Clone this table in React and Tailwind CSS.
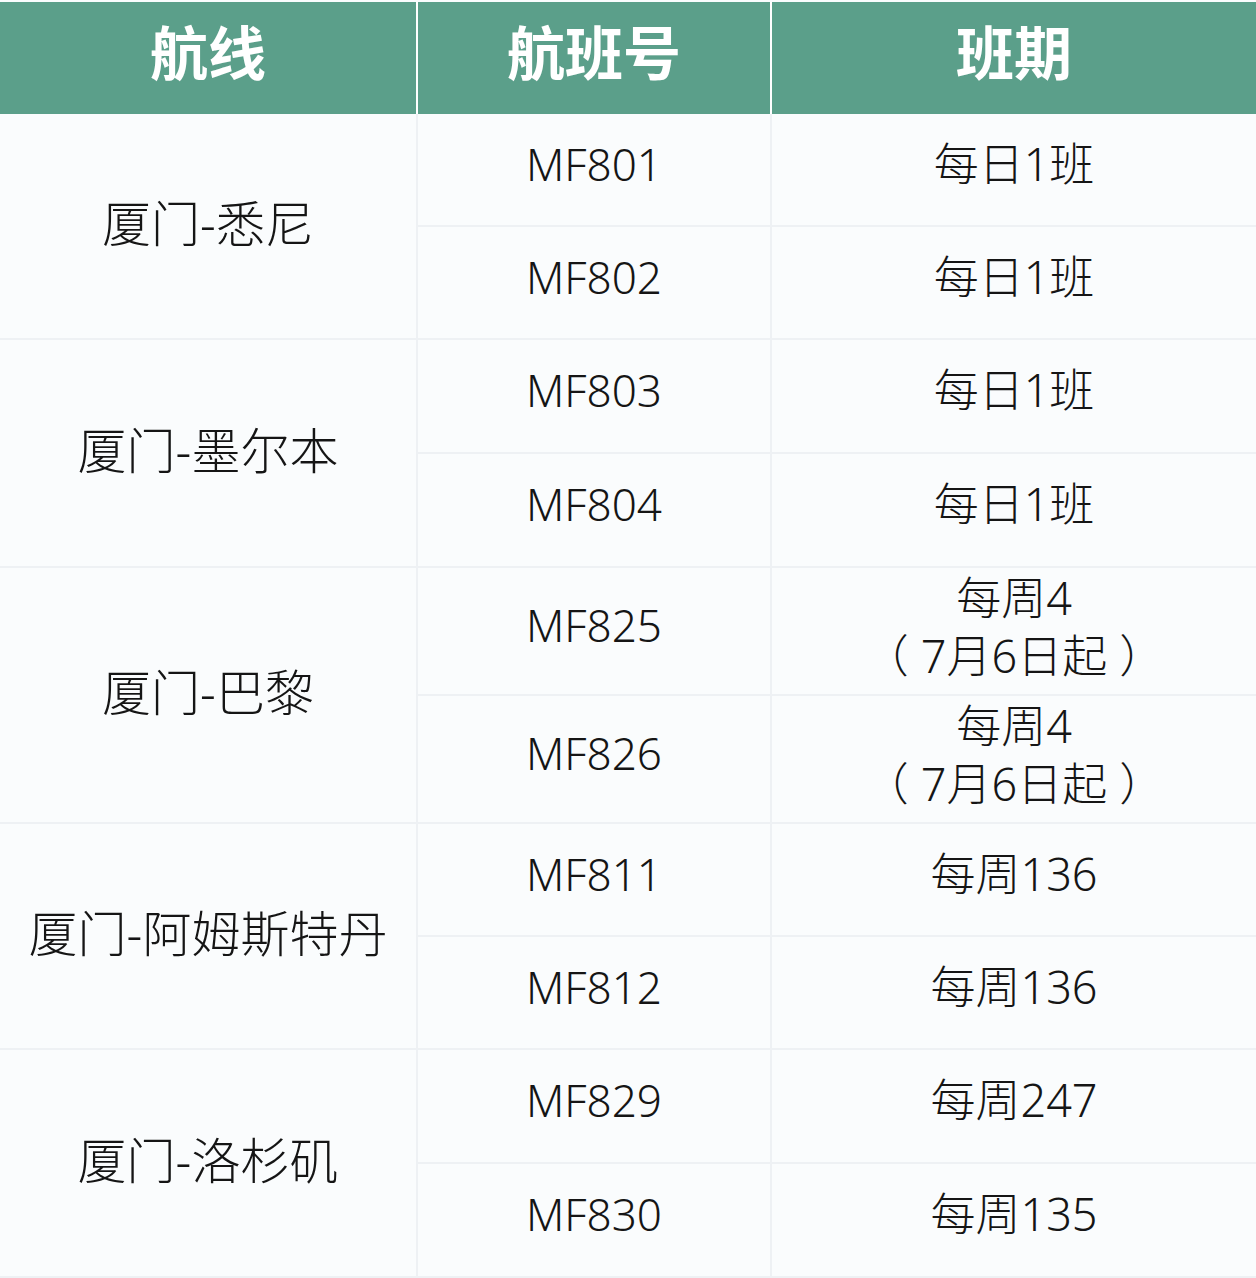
const rows = [
    { route: '厦门-悉尼', flights: [['MF801', '每日1班'], ['MF802', '每日1班']], h: 'h-[113px]' },
    { route: '厦门-墨尔本', flights: [['MF803', '每日1班'], ['MF804', '每日1班']], h: 'h-[114px]' },
    { route: '厦门-巴黎', flights: [['MF825', '每周4', '7月6日起'], ['MF826', '每周4', '7月6日起']], h: 'h-[128px]' },
    { route: '厦门-阿姆斯特丹', flights: [['MF811', '每周136'], ['MF812', '每周136']], h: 'h-[113px]' },
    { route: '厦门-洛杉矶', flights: [['MF829', '每周247'], ['MF830', '每周135']], h: 'h-[114px]' },
];

const App = () => {
    return (
        <div className="w-[1256px] h-[1278px] bg-[#fafcfd] pt-[2px]" style={{ fontFamily: '"Noto Sans", "Noto Sans CJK SC", sans-serif' }}>
            <table className="w-[1256px] border-separate border-spacing-0 table-fixed text-[#151515] font-light">
                <colgroup>
                    <col className="w-[418px]" />
                    <col className="w-[354px]" />
                    <col className="w-[484px]" />
                </colgroup>
                <thead>
                    <tr className="h-[112px]">
                        <th className="bg-[#5b9f8a] text-white text-[58px] font-bold pb-3 border-r-2 border-white">航线</th>
                        <th className="bg-[#5b9f8a] text-white text-[58px] font-bold pb-3 border-r-2 border-white">航班号</th>
                        <th className="bg-[#5b9f8a] text-white text-[58px] font-bold pb-3">班期</th>
                    </tr>
                </thead>
                <tbody>
                    {rows.map((r) =>
                        r.flights.map((f, i) => (
                            <tr key={f[0]} className={r.h}>
                                {i === 0 && (
                                    <td rowSpan={2} className="text-center text-[49px] pb-1 border-r-2 border-b-2 border-[#eef1f4]">
                                        {r.route}
                                    </td>
                                )}
                                <td className="text-center text-[44px] pb-3 border-r-2 border-b-2 border-[#eef1f4]">{f[0]}</td>
                                <td className={f[2] ? 'text-center text-[45px] leading-[58px] pb-2 border-b-2 border-[#eef1f4]' : 'text-center text-[45px] leading-[58px] pb-3 border-b-2 border-[#eef1f4]'}>
                                    <div>{f[1]}</div>
                                    {f[2] && (
                                        <div>
                                            <span className="mr-3">（</span>
                                            {f[2]}
                                            <span className="ml-3">）</span>
                                        </div>
                                    )}
                                </td>
                            </tr>
                        ))
                    )}
                </tbody>
            </table>
        </div>
    );
};

export default App;
